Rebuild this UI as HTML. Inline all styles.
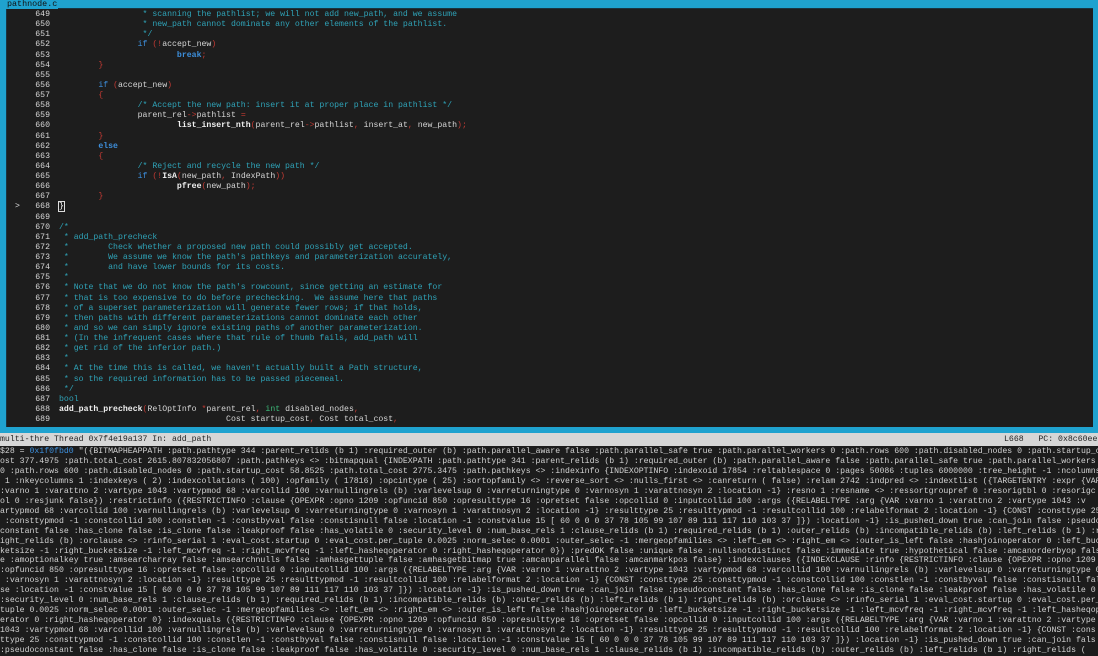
<!DOCTYPE html>
<html><head><meta charset="utf-8"><style>
html,body{margin:0;padding:0;width:1098px;height:656px;overflow:hidden;background:#1c1c1c;font-family:"Liberation Mono","DejaVu Sans Mono",monospace;font-size:8.2px;}
#frame{position:absolute;left:0;top:0;width:1098px;height:433px;background:#1fa2cf;}
#inner{position:absolute;left:6px;top:8px;width:1086px;height:418px;background:#1d1d1d;border-top:1px solid #1a3340;border-left:1px solid #1a3340;}
#title{position:absolute;left:6px;top:-1px;color:#111;font-size:8.4px;line-height:10px;background:#1fa2cf;padding:0 1px;}
.ln{position:absolute;left:0;height:10.125px;line-height:10.125px;white-space:pre;width:1098px;}
.mk{position:absolute;left:15px;color:#ddd;}
.no{position:absolute;left:20px;width:30px;text-align:right;color:#d8d8d8;}
.tx{position:absolute;left:59px;color:#d6d6d6;}
.c{color:#2fa3b8}.k{color:#3d8fdc}.kb{color:#3d8fdc;font-weight:bold}.p{color:#c23a33}.f{color:#f2f2f2;font-weight:bold}.t{color:#2fa3b8}.g{color:#3cb878}
.cur{outline:1px solid #ddd;color:#fff}
#status{position:absolute;left:0;top:433px;width:1098px;height:13px;background:#d6d6d6;color:#222;line-height:13px;white-space:pre;}
#status .r{position:absolute;left:1004px;top:0}
#out{position:absolute;left:0;top:447px;width:1098px;color:#d2d2d2;white-space:pre;line-height:9.95px;overflow:hidden;}
.addr{color:#3d8fdc}
</style></head><body>
<div id="frame"><div id="inner"></div><div id="title">pathnode.c</div></div>
<div id="code">
<div class="ln" style="top:10px"><span class="no">649</span><span class="tx c">                 * scanning the pathlist; we will not add new_path, and we assume</span></div>
<div class="ln" style="top:20.1px"><span class="no">650</span><span class="tx c">                 * new_path cannot dominate any other elements of the pathlist.</span></div>
<div class="ln" style="top:30.25px"><span class="no">651</span><span class="tx c">                 */</span></div>
<div class="ln" style="top:40.4px"><span class="no">652</span><span class="tx">                <span class="k">if</span> <span class="p">(!</span>accept_new<span class="p">)</span></span></div>
<div class="ln" style="top:50.5px"><span class="no">653</span><span class="tx">                        <span class="kb">break</span><span class="p">;</span></span></div>
<div class="ln" style="top:60.6px"><span class="no">654</span><span class="tx">        <span class="p">}</span></span></div>
<div class="ln" style="top:70.75px"><span class="no">655</span></div>
<div class="ln" style="top:80.9px"><span class="no">656</span><span class="tx">        <span class="k">if</span> <span class="p">(</span>accept_new<span class="p">)</span></span></div>
<div class="ln" style="top:91px"><span class="no">657</span><span class="tx">        <span class="p">{</span></span></div>
<div class="ln" style="top:101.1px"><span class="no">658</span><span class="tx c">                /* Accept the new path: insert it at proper place in pathlist */</span></div>
<div class="ln" style="top:111.25px"><span class="no">659</span><span class="tx">                parent_rel<span class="p">-&gt;</span>pathlist <span class="p">=</span></span></div>
<div class="ln" style="top:121.4px"><span class="no">660</span><span class="tx">                        <span class="f">list_insert_nth</span><span class="p">(</span>parent_rel<span class="p">-&gt;</span>pathlist<span class="p">,</span> insert_at<span class="p">,</span> new_path<span class="p">);</span></span></div>
<div class="ln" style="top:131.5px"><span class="no">661</span><span class="tx">        <span class="p">}</span></span></div>
<div class="ln" style="top:141.6px"><span class="no">662</span><span class="tx">        <span class="kb">else</span></span></div>
<div class="ln" style="top:151.75px"><span class="no">663</span><span class="tx">        <span class="p">{</span></span></div>
<div class="ln" style="top:161.9px"><span class="no">664</span><span class="tx c">                /* Reject and recycle the new path */</span></div>
<div class="ln" style="top:172px"><span class="no">665</span><span class="tx">                <span class="k">if</span> <span class="p">(!</span><span class="f">IsA</span><span class="p">(</span>new_path<span class="p">,</span> IndexPath<span class="p">))</span></span></div>
<div class="ln" style="top:182.1px"><span class="no">666</span><span class="tx">                        <span class="f">pfree</span><span class="p">(</span>new_path<span class="p">);</span></span></div>
<div class="ln" style="top:192.25px"><span class="no">667</span><span class="tx">        <span class="p">}</span></span></div>
<div class="ln" style="top:202.4px"><span class="mk">&gt;</span><span class="no">668</span><span class="tx"><span class="cur">}</span></span></div>
<div class="ln" style="top:212.5px"><span class="no">669</span></div>
<div class="ln" style="top:222.6px"><span class="no">670</span><span class="tx c">/*</span></div>
<div class="ln" style="top:232.75px"><span class="no">671</span><span class="tx c"> * add_path_precheck</span></div>
<div class="ln" style="top:242.9px"><span class="no">672</span><span class="tx c"> *        Check whether a proposed new path could possibly get accepted.</span></div>
<div class="ln" style="top:253px"><span class="no">673</span><span class="tx c"> *        We assume we know the path's pathkeys and parameterization accurately,</span></div>
<div class="ln" style="top:263.1px"><span class="no">674</span><span class="tx c"> *        and have lower bounds for its costs.</span></div>
<div class="ln" style="top:273.25px"><span class="no">675</span><span class="tx c"> *</span></div>
<div class="ln" style="top:283.4px"><span class="no">676</span><span class="tx c"> * Note that we do not know the path's rowcount, since getting an estimate for</span></div>
<div class="ln" style="top:293.5px"><span class="no">677</span><span class="tx c"> * that is too expensive to do before prechecking.  We assume here that paths</span></div>
<div class="ln" style="top:303.6px"><span class="no">678</span><span class="tx c"> * of a superset parameterization will generate fewer rows; if that holds,</span></div>
<div class="ln" style="top:313.75px"><span class="no">679</span><span class="tx c"> * then paths with different parameterizations cannot dominate each other</span></div>
<div class="ln" style="top:323.9px"><span class="no">680</span><span class="tx c"> * and so we can simply ignore existing paths of another parameterization.</span></div>
<div class="ln" style="top:334px"><span class="no">681</span><span class="tx c"> * (In the infrequent cases where that rule of thumb fails, add_path will</span></div>
<div class="ln" style="top:344.1px"><span class="no">682</span><span class="tx c"> * get rid of the inferior path.)</span></div>
<div class="ln" style="top:354.25px"><span class="no">683</span><span class="tx c"> *</span></div>
<div class="ln" style="top:364.4px"><span class="no">684</span><span class="tx c"> * At the time this is called, we haven't actually built a Path structure,</span></div>
<div class="ln" style="top:374.5px"><span class="no">685</span><span class="tx c"> * so the required information has to be passed piecemeal.</span></div>
<div class="ln" style="top:384.6px"><span class="no">686</span><span class="tx c"> */</span></div>
<div class="ln" style="top:394.75px"><span class="no">687</span><span class="tx t">bool</span></div>
<div class="ln" style="top:404.9px"><span class="no">688</span><span class="tx"><span class="f">add_path_precheck</span><span class="p">(</span>RelOptInfo <span class="p">*</span>parent_rel<span class="p">,</span> <span class="g">int</span> disabled_nodes<span class="p">,</span></span></div>
<div class="ln" style="top:415px"><span class="no">689</span><span class="tx">                                  Cost startup_cost<span class="p">,</span> Cost total_cost<span class="p">,</span></span></div>
</div>
<div id="status">multi-thre Thread 0x7f4e19a137 In: add_path<span class="r">L668   PC: 0x8c60ee</span></div>
<div id="out">$28 = <span class="addr">0x1f0fbd0</span> "({BITMAPHEAPPATH :path.pathtype 344 :parent_relids (b 1) :required_outer (b) :path.parallel_aware false :path.parallel_safe true :path.parallel_workers 0 :path.rows 600 :path.disabled_nodes 0 :path.startup_c
ost 377.4975 :path.total_cost 2615.807832056807 :path.pathkeys &lt;&gt; :bitmapqual {INDEXPATH :path.pathtype 341 :parent_relids (b 1) :required_outer (b) :path.parallel_aware false :path.parallel_safe true :path.parallel_workers
0 :path.rows 600 :path.disabled_nodes 0 :path.startup_cost 58.8525 :path.total_cost 2775.3475 :path.pathkeys &lt;&gt; :indexinfo {INDEXOPTINFO :indexoid 17854 :reltablespace 0 :pages 50086 :tuples 6000000 :tree_height -1 :ncolumns
 1 :nkeycolumns 1 :indexkeys ( 2) :indexcollations ( 100) :opfamily ( 17816) :opcintype ( 25) :sortopfamily &lt;&gt; :reverse_sort &lt;&gt; :nulls_first &lt;&gt; :canreturn ( false) :relam 2742 :indpred &lt;&gt; :indextlist ({TARGETENTRY :expr {VAR
:varno 1 :varattno 2 :vartype 1043 :vartypmod 68 :varcollid 100 :varnullingrels (b) :varlevelsup 0 :varreturningtype 0 :varnosyn 1 :varattnosyn 2 :location -1} :resno 1 :resname &lt;&gt; :ressortgroupref 0 :resorigtbl 0 :resorigc
ol 0 :resjunk false}) :restrictinfo ({RESTRICTINFO :clause {OPEXPR :opno 1209 :opfuncid 850 :opresulttype 16 :opretset false :opcollid 0 :inputcollid 100 :args ({RELABELTYPE :arg {VAR :varno 1 :varattno 2 :vartype 1043 :v
artypmod 68 :varcollid 100 :varnullingrels (b) :varlevelsup 0 :varreturningtype 0 :varnosyn 1 :varattnosyn 2 :location -1} :resulttype 25 :resulttypmod -1 :resultcollid 100 :relabelformat 2 :location -1} {CONST :consttype 25
 :consttypmod -1 :constcollid 100 :constlen -1 :constbyval false :constisnull false :location -1 :constvalue 15 [ 60 0 0 0 37 78 105 99 107 89 111 117 110 103 37 ]}) :location -1} :is_pushed_down true :can_join false :pseudo
constant false :has_clone false :is_clone false :leakproof false :has_volatile 0 :security_level 0 :num_base_rels 1 :clause_relids (b 1) :required_relids (b 1) :outer_relids (b) :incompatible_relids (b) :left_relids (b 1) :r
ight_relids (b) :orclause &lt;&gt; :rinfo_serial 1 :eval_cost.startup 0 :eval_cost.per_tuple 0.0025 :norm_selec 0.0001 :outer_selec -1 :mergeopfamilies &lt;&gt; :left_em &lt;&gt; :right_em &lt;&gt; :outer_is_left false :hashjoinoperator 0 :left_buc
ketsize -1 :right_bucketsize -1 :left_mcvfreq -1 :right_mcvfreq -1 :left_hasheqoperator 0 :right_hasheqoperator 0}) :predOK false :unique false :nullsnotdistinct false :immediate true :hypothetical false :amcanorderbyop fals
e :amoptionalkey true :amsearcharray false :amsearchnulls false :amhasgettuple false :amhasgetbitmap true :amcanparallel false :amcanmarkpos false} :indexclauses ({INDEXCLAUSE :rinfo {RESTRICTINFO :clause {OPEXPR :opno 1209
:opfuncid 850 :opresulttype 16 :opretset false :opcollid 0 :inputcollid 100 :args ({RELABELTYPE :arg {VAR :varno 1 :varattno 2 :vartype 1043 :vartypmod 68 :varcollid 100 :varnullingrels (b) :varlevelsup 0 :varreturningtype 0
 :varnosyn 1 :varattnosyn 2 :location -1} :resulttype 25 :resulttypmod -1 :resultcollid 100 :relabelformat 2 :location -1} {CONST :consttype 25 :consttypmod -1 :constcollid 100 :constlen -1 :constbyval false :constisnull fal
se :location -1 :constvalue 15 [ 60 0 0 0 37 78 105 99 107 89 111 117 110 103 37 ]}) :location -1} :is_pushed_down true :can_join false :pseudoconstant false :has_clone false :is_clone false :leakproof false :has_volatile 0
:security_level 0 :num_base_rels 1 :clause_relids (b 1) :required_relids (b 1) :incompatible_relids (b) :outer_relids (b) :left_relids (b 1) :right_relids (b) :orclause &lt;&gt; :rinfo_serial 1 :eval_cost.startup 0 :eval_cost.per_
tuple 0.0025 :norm_selec 0.0001 :outer_selec -1 :mergeopfamilies &lt;&gt; :left_em &lt;&gt; :right_em &lt;&gt; :outer_is_left false :hashjoinoperator 0 :left_bucketsize -1 :right_bucketsize -1 :left_mcvfreq -1 :right_mcvfreq -1 :left_hasheqop
erator 0 :right_hasheqoperator 0} :indexquals ({RESTRICTINFO :clause {OPEXPR :opno 1209 :opfuncid 850 :opresulttype 16 :opretset false :opcollid 0 :inputcollid 100 :args ({RELABELTYPE :arg {VAR :varno 1 :varattno 2 :vartype
1043 :vartypmod 68 :varcollid 100 :varnullingrels (b) :varlevelsup 0 :varreturningtype 0 :varnosyn 1 :varattnosyn 2 :location -1} :resulttype 25 :resulttypmod -1 :resultcollid 100 :relabelformat 2 :location -1} {CONST :cons
ttype 25 :consttypmod -1 :constcollid 100 :constlen -1 :constbyval false :constisnull false :location -1 :constvalue 15 [ 60 0 0 0 37 78 105 99 107 89 111 117 110 103 37 ]}) :location -1} :is_pushed_down true :can_join fals
:pseudoconstant false :has_clone false :is_clone false :leakproof false :has_volatile 0 :security_level 0 :num_base_rels 1 :clause_relids (b 1) :incompatible_relids (b) :outer_relids (b) :left_relids (b 1) :right_relids (</div>
</body></html>
